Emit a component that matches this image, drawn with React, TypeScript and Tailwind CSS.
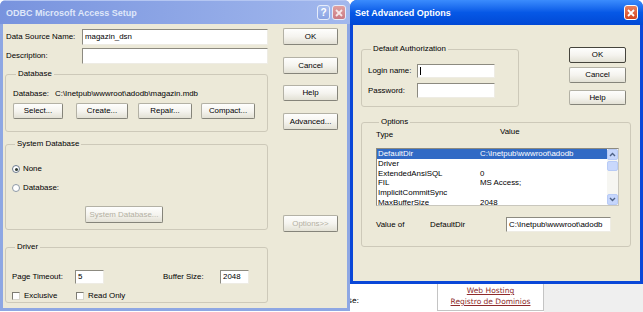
import type { ReactNode } from "react"

const rows = [
  ["DefaultDir", "C:\\Inetpub\\wwwroot\\adodb"],
  ["Driver", ""],
  ["ExtendedAnsiSQL", "0"],
  ["FIL", "MS Access;"],
  ["ImplicitCommitSync", ""],
  ["MaxBufferSize", "2048"],
]

function Btn({ className = "", children, disabled = false, def = false }: { className?: string; children: ReactNode; disabled?: boolean; def?: boolean }) {
  return (
    <div
      className={`flex items-center justify-center rounded-[2px] border bg-gradient-to-b from-[#fefefd] via-[#f5f4ef] to-[#e3e1d5] ${
        def ? "border-[#45443c]" : "border-[#b3b1a5] border-r-[#85847a] border-b-[#85847a]"
      } ${disabled ? "text-[#b3b0a2]" : "text-black"} ${className}`}
    >
      {children}
    </div>
  )
}

function Field({ className = "", children }: { className?: string; children?: ReactNode }) {
  return (
    <div className={`flex items-center border border-t-[#8c8a80] border-l-[#8c8a80] border-b-[#eeece4] border-r-[#eeece4] bg-white pl-[2px] ${className}`}>
      {children}
    </div>
  )
}

function Group({ label, className = "", children }: { label: string; className?: string; children: ReactNode }) {
  return (
    <fieldset className={`rounded-[3px] border border-[#cdc9b9] ${className}`}>
      <legend className="ml-[3px] px-[2px] leading-[10px]">{label}</legend>
      {children}
    </fieldset>
  )
}

function CloseX({ active }: { active: boolean }) {
  return (
    <div
      className={`flex h-[15px] w-[14px] items-center justify-center rounded-[3px] border ${
        active ? "border-white bg-gradient-to-b from-[#e9805e] to-[#d4431c]" : "border-[#e6ecfa] bg-gradient-to-b from-[#e0a0a0] to-[#c97a84]"
      }`}
    >
      <svg width="8" height="8" viewBox="0 0 8 8">
        <path d="M1 1 L7 7 M7 1 L1 7" stroke={active ? "#ffffff" : "#f6e8ea"} strokeWidth="1.8" />
      </svg>
    </div>
  )
}

function Chevron({ up }: { up: boolean }) {
  return (
    <svg width="7" height="5" viewBox="0 0 7 5">
      <path d={up ? "M1 4 L3.5 1.5 L6 4" : "M1 1 L3.5 3.5 L6 1"} stroke="#4d6185" strokeWidth="1.4" fill="none" />
    </svg>
  )
}

function AccessSetup() {
  return (
    <div className="absolute left-0 top-0 flex h-[311px] w-[350px] flex-col overflow-hidden rounded-t-[6px] bg-[#8ea7e3]">
      <div className="flex h-[24px] items-center border-t border-[#b4c6f2] bg-gradient-to-r from-[#7893de] to-[#a2b8ed] pl-[6px] pr-[4px]">
        <span className="text-[9px] font-bold text-[#dfe7f9]">ODBC Microsoft Access Setup</span>
        <div className="ml-auto flex gap-[2px]">
          <div className="flex h-[15px] w-[13px] items-center justify-center rounded-[3px] border border-[#e6ecfa] bg-gradient-to-b from-[#a9bff0] to-[#8aa3e3] text-[10px] font-bold leading-none text-white">
            ?
          </div>
          <CloseX active={false} />
        </div>
      </div>
      <div className="mx-[3px] mb-[3px] flex flex-1 bg-[#ece9d8] pl-[2px] pt-[4px]">
        <div className="flex w-[263px] flex-col">
          <div className="flex h-[17px] items-center pl-[1px]">
            <span>Data Source Name:</span>
            <Field className="ml-auto h-[16px] w-[186px] self-end">magazin_dsn</Field>
          </div>
          <div className="mt-[3px] flex h-[16px] items-center pl-[1px]">
            <span>Description:</span>
            <Field className="ml-auto h-[16px] w-[186px]" />
          </div>

          <Group label="Database" className="mt-[5px] w-[263px] pb-[12px] pl-[7px]">
            <div className="mt-[10px] flex h-[10px] items-center">
              <span className="w-[42px]">Database:</span>
              <span>C:\Inetpub\wwwroot\adodb\magazin.mdb</span>
            </div>
            <div className="mt-[4px] flex h-[16px]">
              <Btn className="w-[50px]">Select...</Btn>
              <Btn className="ml-[13px] w-[52px]">Create...</Btn>
              <Btn className="ml-[10px] w-[54px]">Repair...</Btn>
              <Btn className="ml-[9px] w-[54px]">Compact...</Btn>
            </div>
          </Group>

          <Group label="System Database" className="mt-[7px] w-[263px] pb-[6px] pl-[6px]">
            <div className="mt-[15px] flex h-[10px] items-center">
              <div className="flex h-[8px] w-[8px] items-center justify-center rounded-full border border-[#6c7b8f] bg-white">
                <div className="h-[3px] w-[3px] rounded-full bg-[#2e3a30]" />
              </div>
              <span className="ml-[3px]">None</span>
            </div>
            <div className="mt-[9px] flex h-[10px] items-center">
              <div className="h-[8px] w-[8px] rounded-full border border-[#8e99a6] bg-white" />
              <span className="ml-[3px]">Database:</span>
            </div>
            <Btn disabled className="ml-[73px] mt-[13px] h-[17px] w-[78px]">
              System Database...
            </Btn>
          </Group>

          <Group label="Driver" className="mt-[12px] w-[263px] pb-[1px] pl-[6px]">
            <div className="mt-[18px] flex h-[14px] items-center">
              <span className="w-[63px]">Page Timeout:</span>
              <Field className="h-[14px] w-[29px]">5</Field>
              <span className="ml-[59px] w-[57px]">Buffer Size:</span>
              <Field className="h-[14px] w-[29px]">2048</Field>
            </div>
            <div className="mt-[7px] flex h-[10px] items-center">
              <div className="flex w-[64px] items-center">
                <div className="h-[8px] w-[8px] border border-[#7d7b72] border-b-[#d8d6cc] border-r-[#d8d6cc] bg-white" />
                <span className="ml-[4px]">Exclusive</span>
              </div>
              <div className="h-[8px] w-[8px] border border-[#7d7b72] border-b-[#d8d6cc] border-r-[#d8d6cc] bg-white" />
              <span className="ml-[4px]">Read Only</span>
            </div>
          </Group>
        </div>

        <div className="ml-[15px] flex w-[55px] flex-col">
          <Btn className="h-[17px]">OK</Btn>
          <Btn className="mt-[12px] h-[17px]">Cancel</Btn>
          <Btn className="mt-[11px] h-[16px]">Help</Btn>
          <Btn className="mt-[12px] h-[17px]">Advanced...</Btn>
          <Btn disabled className="mt-[85px] h-[17px]">
            Options&gt;&gt;
          </Btn>
        </div>
      </div>
    </div>
  )
}

function AdvancedOptions() {
  return (
    <div className="absolute left-[350px] top-0 flex h-[284px] w-[293px] flex-col overflow-hidden rounded-t-[7px] bg-[#0a47d8]">
      <div className="flex h-[25px] items-center bg-gradient-to-b from-[#3b8cfd] via-[#0658e6] to-[#0148d5] pl-[5px] pr-[5px]">
        <span className="text-[9px] font-bold text-white">Set Advanced Options</span>
        <div className="ml-auto">
          <CloseX active />
        </div>
      </div>
      <div className="mx-[3px] mb-[3px] flex flex-1 flex-col bg-[#ece9d8] pl-[8px] pt-[19px]">
        <div className="flex">
          <Group label="Default Authorization" className="w-[158px] pb-[8px] pl-[6px]">
            <div className="mt-[10px] flex h-[14px] items-center">
              <span className="w-[49px]">Login name:</span>
              <Field className="h-[14px] w-[78px]">
                <div className="h-[8px] w-px bg-black" />
              </Field>
            </div>
            <div className="mt-[5px] flex h-[15px] items-center">
              <span className="w-[49px]">Password:</span>
              <Field className="h-[15px] w-[78px]" />
            </div>
          </Group>
          <div className="ml-[50px] flex w-[57px] flex-col">
            <Btn def className="mt-[3px] h-[16px]">OK</Btn>
            <Btn className="mt-[4px] h-[16px]">Cancel</Btn>
            <Btn className="mt-[7px] h-[15px]">Help</Btn>
          </div>
        </div>

        <Group label="Options" className="mt-[10px] w-[270px] pb-[14px] pl-[14px]">
          <div className="flex h-[13px] items-end">
            <span className="w-[124px]">Type</span>
            <span className="pb-[3px]">Value</span>
          </div>
          <div className="mt-[8px] flex h-[58px] w-[243px] border border-[#8c8a80] border-b-[#c9c7bd] border-r-[#c9c7bd] bg-white">
            <div className="flex-1 overflow-hidden">
              {rows.map(([t, v], i) => (
                <div key={t} className={`flex h-[9.8px] items-center pl-[1px] leading-[9.8px] ${i === 0 ? "bg-[#316ac5] text-white" : ""}`}>
                  <span className="w-[102px]">{t}</span>
                  <span>{v}</span>
                </div>
              ))}
            </div>
            <div className="flex w-[11px] flex-col bg-[#f6f6f2]">
              <div className="flex h-[11px] items-center justify-center rounded-[2px] border border-[#b8cbf6] bg-[#c6d6fc]">
                <Chevron up />
              </div>
              <div className="mt-[1px] h-[10px] rounded-[2px] border border-[#b8cbf6] bg-[#c9d8fc]" />
              <div className="flex-1" />
              <div className="flex h-[11px] items-center justify-center rounded-[2px] border border-[#b8cbf6] bg-[#c6d6fc]">
                <Chevron up={false} />
              </div>
            </div>
          </div>
          <div className="mt-[11px] flex h-[15px] items-center">
            <span className="w-[54px]">Value of</span>
            <span className="w-[76px]">DefaultDir</span>
            <Field className="h-[15px] w-[105px]">C:\Inetpub\wwwroot\adodb</Field>
          </div>
        </Group>
      </div>
    </div>
  )
}

function WebPage() {
  return (
    <div className="flex h-full pl-[348px] pt-[284px] font-['DejaVu_Sans',Verdana,sans-serif] text-[7.5px]">
      <div className="w-[89px] pt-[12px] leading-[10px] text-black">se:</div>
      <div className="flex h-[27px] w-[107px] flex-col items-center border-x border-b border-[#c4c4c4] bg-white pt-[1px] text-[#8e2b2b] underline">
        <span className="leading-[11px]">Web Hosting</span>
        <span className="leading-[11px]">Registro de Dominios</span>
      </div>
      <div className="flex-1 bg-[#efefef]" />
    </div>
  )
}

export default function App() {
  return (
    <div className="relative h-[312px] w-[643px] overflow-hidden bg-white font-['Liberation_Sans',Arial,sans-serif] text-[7.9px] leading-[10px] text-black">
      <WebPage />
      <AccessSetup />
      <AdvancedOptions />
    </div>
  )
}
